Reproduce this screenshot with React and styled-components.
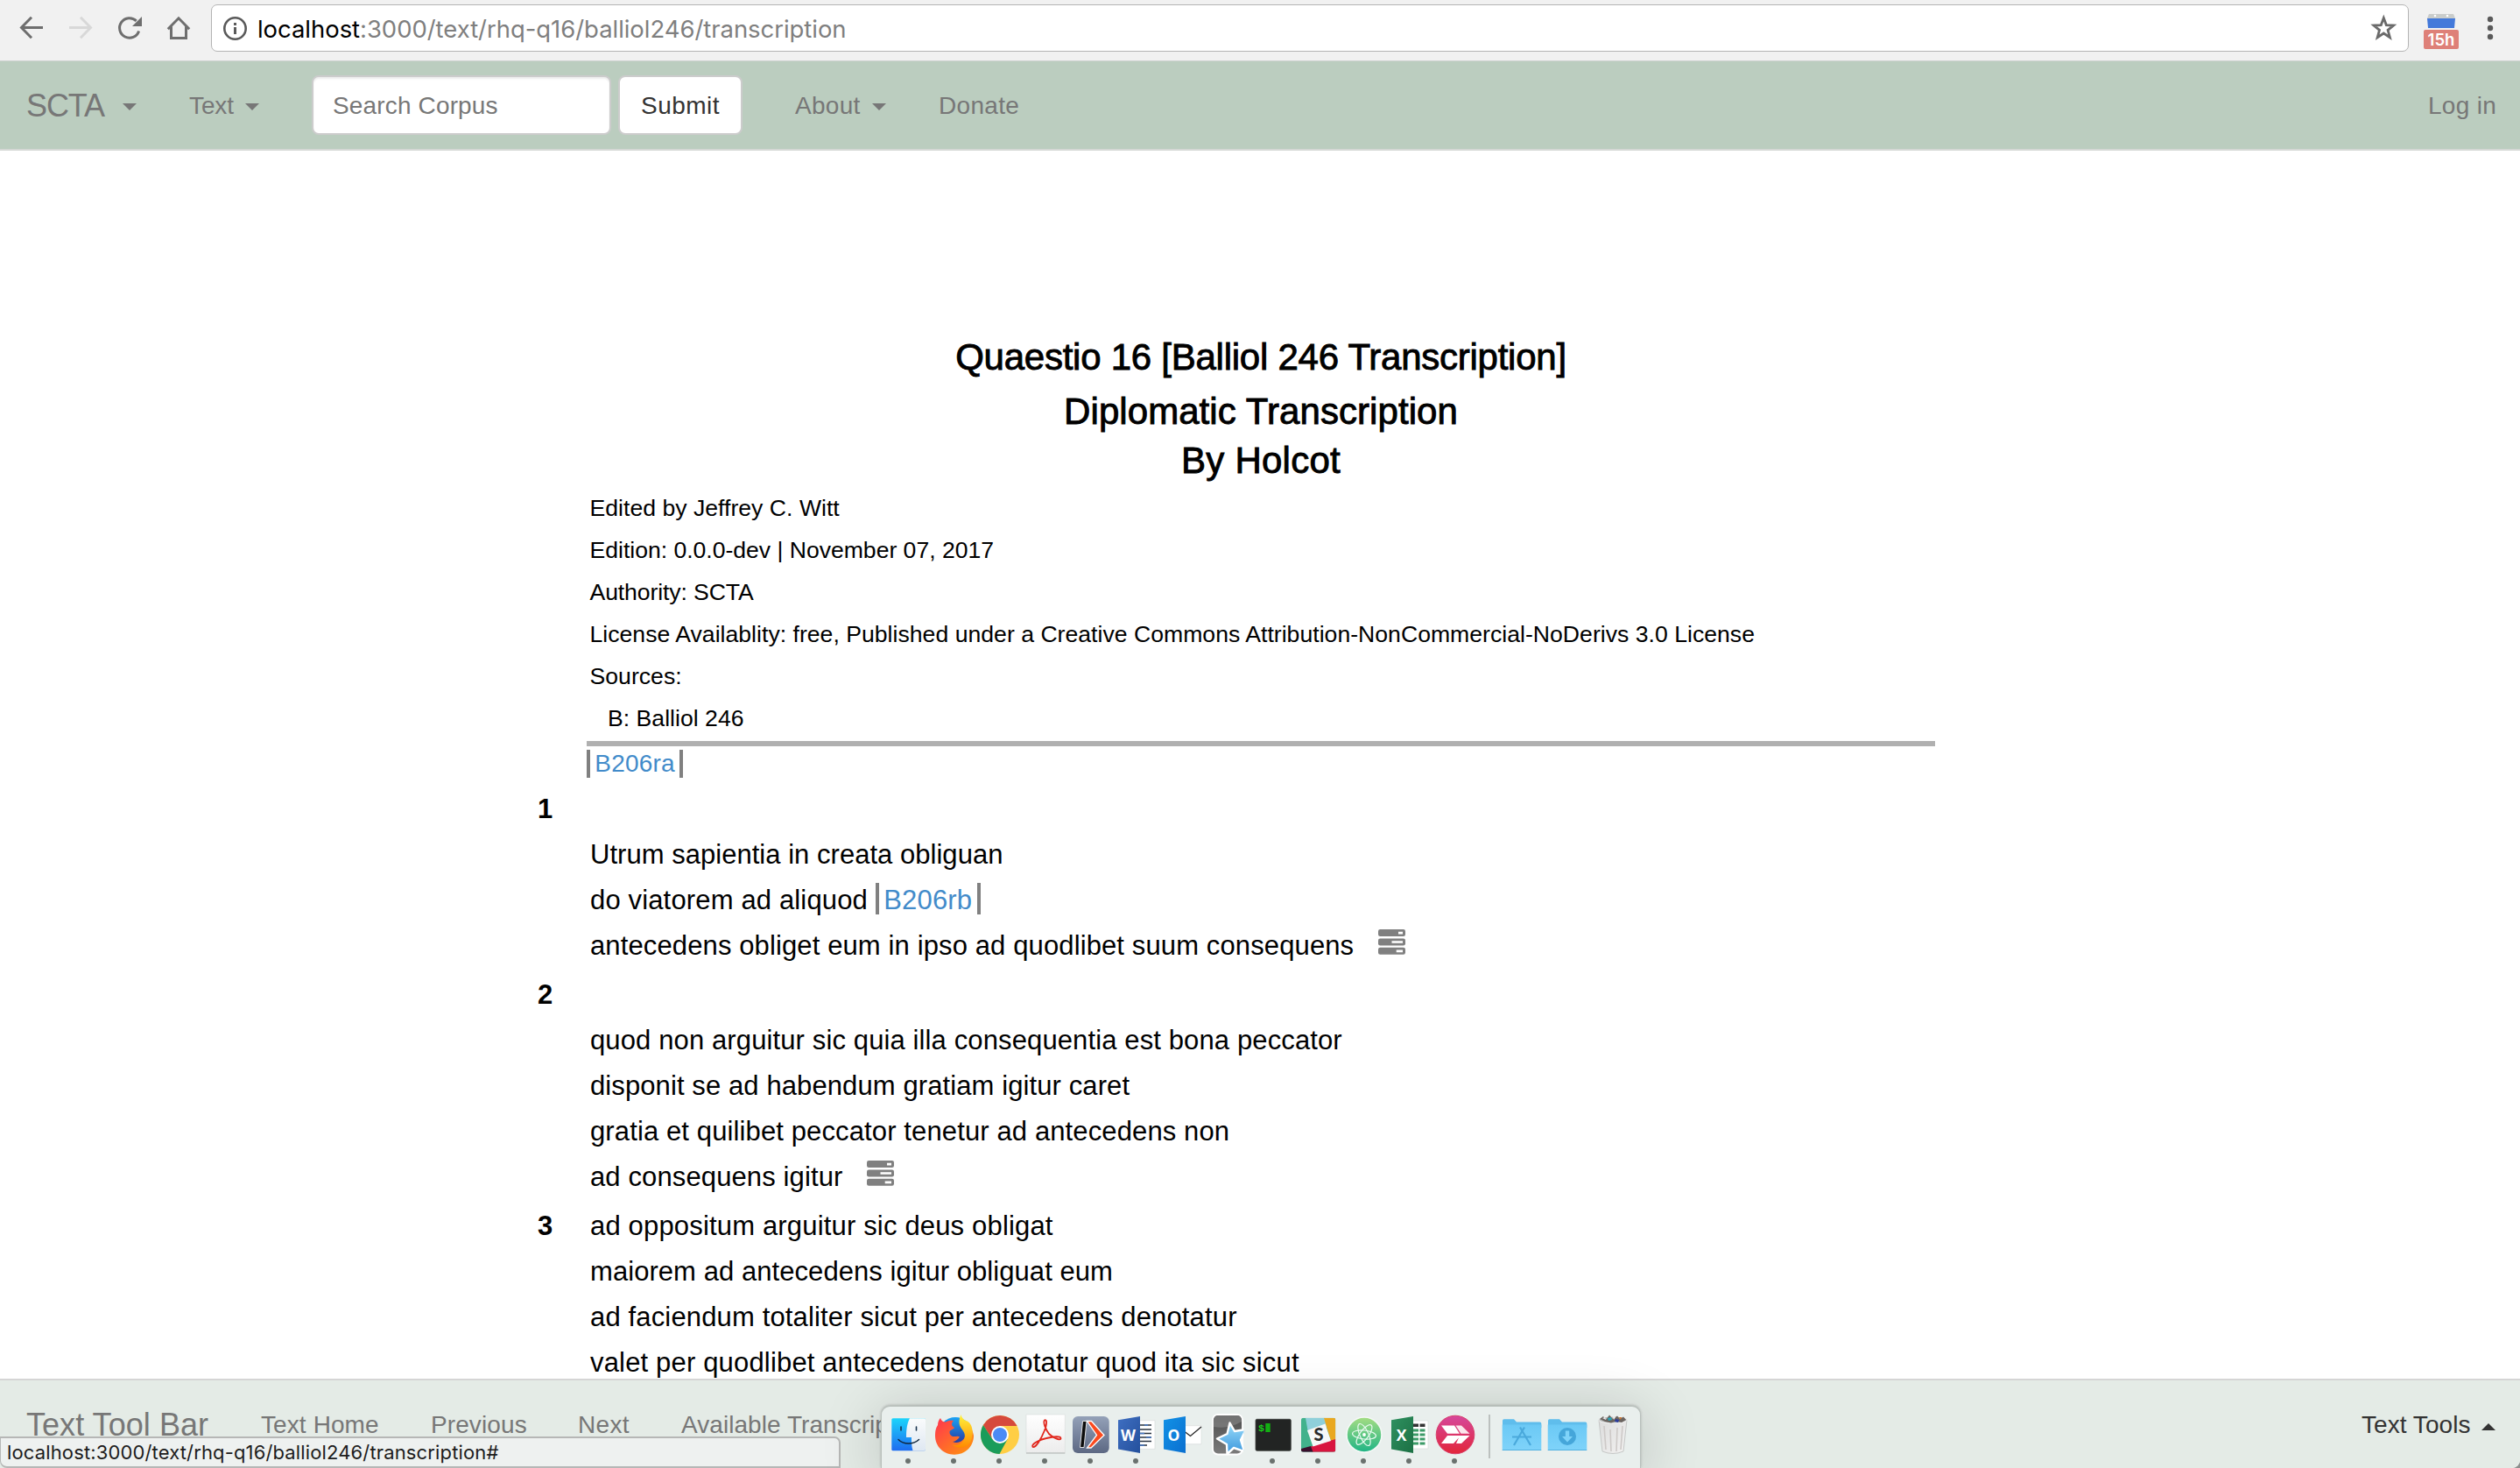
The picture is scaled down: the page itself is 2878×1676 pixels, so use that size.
import React from "react";
import styled, { createGlobalStyle } from "styled-components";

const GlobalStyle = createGlobalStyle`
  html, body { margin: 0; padding: 0; background: #8b8f8d; }
  * { box-sizing: border-box; }
`;

const sans = '"Liberation Sans", Arial, sans-serif';
const system = 'Inter, Roboto, sans-serif';

const Window = styled.div`
  position: relative;
  display: flex;
  flex-direction: column;
  width: 2878px;
  height: 1676px;
  overflow: hidden;
  background: #fff;
  border-bottom-right-radius: 9px;
  font-family: ${sans};
  color: #000;
`;

/* ---------- Browser toolbar ---------- */

const BrowserBar = styled.header`
  display: flex;
  align-items: flex-start;
  flex: none;
  height: 70px;
  padding: 5px 28px 0 22px;
  background: #f1f1f1;
  border-bottom: 1px solid #cfd3d0;
`;

const BrowserButtons = styled.div`
  display: flex;
  gap: 28px;
  padding-top: 13px;
  margin-right: 23px;
`;

const Icon = styled.svg`
  display: block;
  flex: none;
  overflow: visible;
`;

const AddressField = styled.div`
  display: flex;
  flex: 1;
  align-items: center;
  height: 54px;
  padding: 0 13px 0 12px;
  background: #fff;
  border: 1px solid #b4b4b4;
  border-radius: 7px;
`;

const Url = styled.span`
  flex: 1;
  margin-left: 10px;
  padding-top: 2px;
  font-family: ${system};
  font-size: 27.5px;
  line-height: 40px;
  letter-spacing: -0.05px;
  color: #7f7f7f;
`;

const UrlHost = styled.span`
  color: #000;
`;

const Extension = styled.div`
  display: flex;
  flex-direction: column;
  align-items: center;
  width: 40px;
  margin: 11px 30px 0 17px;
`;

const ExtensionBadge = styled.span`
  width: 40px;
  height: 22px;
  margin-top: 2px;
  border-radius: 2px;
  background: #de8078;
  color: #fff;
  font-family: ${system};
  font-size: 18.5px;
  font-weight: 600;
  line-height: 23px;
  text-align: center;
`;

/* ---------- Site navigation ---------- */

const Navbar = styled.nav`
  display: flex;
  align-items: center;
  flex: none;
  height: 102px;
  padding: 0 28px 0 30px;
  background: #bbcdbf;
  border-bottom: 2px solid #d5d8d5;
`;

const NavItem = styled.a`
  display: flex;
  align-items: center;
  justify-content: space-between;
  width: ${(p) => p.$width}px;
  margin-right: ${(p) => (p.$last ? 0 : 60)}px;
  padding-top: 2px;
  font-size: ${(p) => (p.$brand ? 36 : 28)}px;
  line-height: 40px;
  letter-spacing: ${(p) => p.$spacing ?? 0.3}px;
  white-space: nowrap;
  color: ${(p) => (p.$dark ? "#333" : "#777")};
`;

const Caret = styled.i`
  width: 0;
  height: 0;
  margin-top: ${(p) => (p.$up ? 3 : 2)}px;
  border: 8px solid transparent;
  border-top: ${(p) => (p.$up ? "0" : "8px solid #777")};
  border-bottom: ${(p) => (p.$up ? "8px solid #333" : "0")};
`;

const SearchForm = styled.form`
  display: flex;
  gap: 8px;
  margin: 0 60px 0 0;
`;

const SearchField = styled.div`
  width: 342px;
  height: 68px;
  padding: 1px 22px 0;
  border: 2px solid #ccc;
  border-radius: 8px;
  background: #fff;
  box-shadow: inset 0 2px 2px rgba(0, 0, 0, 0.075);
  color: #777;
  font-size: 28px;
  line-height: 64px;
  letter-spacing: 0.15px;
`;

const SubmitButton = styled.div`
  width: 142px;
  height: 68px;
  padding-top: 1px;
  border: 2px solid #ccc;
  border-radius: 8px;
  background: #fff;
  color: #333;
  font-size: 28px;
  line-height: 64px;
  letter-spacing: 0.45px;
  text-align: center;
`;

const Spacer = styled.div`
  flex: 1;
`;

/* ---------- Transcription ---------- */

const Main = styled.main`
  flex: 1;
  min-height: 0;
  width: 1596px;
  margin-left: 614px;
  padding-top: 214px;
  overflow: hidden;
`;

const DocumentHead = styled.section`
  margin-left: 56px;
  border-bottom: 6px solid #b0b0b0;
  padding-bottom: 2px;
`;

const Title = styled.h2`
  margin: 0 0 ${(p) => p.$gap}px;
  font-size: 42px;
  font-weight: 400;
  line-height: 44px;
  letter-spacing: ${(p) => p.$spacing}px;
  text-align: center;
  -webkit-text-stroke: 0.9px #000;
`;

const Meta = styled.div`
  padding-left: ${(p) => (p.$indent ? 24 : 3.5)}px;
  font-size: 26.6px;
  line-height: 48px;
  letter-spacing: ${(p) => p.$spacing ?? 0.02}px;
  white-space: nowrap;
`;

const PageBreak = styled.a`
  display: block;
  height: ${(p) => (p.$small ? 32 : 36)}px;
  width: ${(p) => (p.$small ? 110 : 120)}px;
  margin: ${(p) => (p.$small ? "4px 0 10px 56px" : "0 0 4px 0")};
  padding-top: ${(p) => (p.$small ? 0 : 2)}px;
  border: solid #808080;
  border-width: 0 4px;
  color: #428bca;
  font-size: ${(p) => (p.$small ? 28 : 31)}px;
  line-height: ${(p) => (p.$small ? 32 : 36)}px;
  letter-spacing: 0.2px;
  text-align: center;
`;

const Paragraph = styled.section`
  display: flex;
  margin-bottom: 4px;
`;

const Gutter = styled.b`
  flex: none;
  width: 60px;
  font-size: 31px;
  line-height: 52px;
`;

const Lines = styled.div`
  padding-top: ${(p) => (p.$dropped ? 52 : 0)}px;
`;

const Line = styled.div`
  display: flex;
  align-items: center;
  height: 52px;
  font-size: 31px;
  line-height: 52px;
  letter-spacing: ${(p) => p.$spacing ?? 0.12}px;
  white-space: pre;
`;

const ServerIcon = styled(Icon)`
  margin: 0 0 9px 28px;
`;

/* ---------- Bottom bar, status bubble and dock ---------- */

const ToolBar = styled(Navbar)`
  border-bottom: 0;
  border-top: 2px solid #d5d5d5;
  background: #e4ebe6;
`;

const StatusBubble = styled.div`
  position: absolute;
  left: 0;
  bottom: 0;
  width: 960px;
  height: 36px;
  padding-left: 7px;
  border: 2px solid #b6b7b6;
  border-left-width: 1px;
  border-radius: 0 7px 0 8px;
  background: #eef1f0;
  color: #1c1c1c;
  font-family: ${system};
  font-size: 22px;
  line-height: 32px;
  letter-spacing: 0.14px;
`;

const DockPanel = styled.div`
  position: absolute;
  left: 1006px;
  bottom: 0;
  display: flex;
  width: 868px;
  height: 71px;
  padding: 6px 5px 0 4px;
  border: 1px solid #b9c0bc;
  border-bottom: 0;
  border-radius: 10px 10px 0 0;
  background: #e9efed;
  box-shadow: 0 -1px 3px rgba(0, 0, 0, 0.2), 0 10px 70px rgba(0, 0, 0, 0.2);
`;

const DockItem = styled.div`
  display: flex;
  flex-direction: column;
  align-items: center;
  width: 52px;
`;

const RunningDot = styled.i`
  width: 6px;
  height: 6px;
  margin-top: 1px;
  border-radius: 50%;
  background: #6a716e;
`;

const DockDivider = styled.i`
  width: 2px;
  height: 50px;
  margin: 3px 10px 0 13px;
  background: #bcc1bf;
`;

/* ---------- Icons ---------- */

const BackIcon = ({ color, flip }) => (
  <Icon width="28" height="28" viewBox="0 0 28 28" fill="none" stroke={color} strokeWidth="3">
    <path transform={flip ? "translate(28 0) scale(-1 1)" : undefined} d="M27 13.5H3M14 1.8L2.5 13.5L14 25.2" />
  </Icon>
);

const ReloadIcon = () => (
  <Icon width="28" height="28" viewBox="0 0 28 28">
    <path d="M24.6 17.5A11.3 11.3 0 1 1 21.7 5.8" fill="none" stroke="#6e6e6e" strokeWidth="3" />
    <path d="M28 1v11H17z" fill="#6e6e6e" />
  </Icon>
);

const HomeIcon = () => (
  <Icon width="28" height="28" viewBox="0 0 28 28" fill="none" stroke="#6e6e6e" strokeWidth="3">
    <path d="M1.8 15.2L14 2.8L26.2 15.2M5.5 12.5V25.5H22.5V12.5" />
  </Icon>
);

const InfoIcon = () => (
  <Icon width="30" height="30" viewBox="0 0 30 30">
    <circle cx="14.5" cy="15.5" r="12.2" fill="none" stroke="#5a5a5a" strokeWidth="2.6" />
    <path d="M13 14h3v8h-3zM13 9h3v3h-3z" fill="#5a5a5a" />
  </Icon>
);

const StarIcon = () => (
  <Icon width="30" height="30" viewBox="0 0 30 30">
    <path
      d="M15.3 3.6L18.3 11.6L26.6 12L20.1 17.3L22.4 25.7L15.3 21L8.2 25.7L10.5 17.3L4 12L12.3 11.6Z"
      fill="none"
      stroke="#6a6a6a"
      strokeWidth="2.8"
    />
  </Icon>
);

const Servers = () => (
  <ServerIcon width="31" height="29" viewBox="0 0 31 29">
    <rect width="31" height="8" rx="2.2" fill="#808080" />
    <rect y="10.4" width="31" height="8" rx="2.2" fill="#808080" />
    <rect y="20.8" width="31" height="8" rx="2.2" fill="#808080" />
    <path d="M23 2.8h5v2.6h-5zM15.5 13.2H28v2.6H15.5zM20.7 23.6H28v2.6h-7.3z" fill="#fff" />
  </ServerIcon>
);

const Gradient = ({ id, from, to, diagonal }) => (
  <linearGradient id={id} x1="0" y1="0" x2={diagonal ? "1" : "0"} y2="1">
    <stop offset="0" stopColor={from} />
    <stop offset="1" stopColor={to} />
  </linearGradient>
);

const Finder = () => (
  <>
    <Gradient id="finder" from="#1cd4fb" to="#1e6cf0" />
    <Gradient id="finderFace" from="#fafbfc" to="#dfe8f2" />
    <rect x="7.3" y="7.3" width="38.7" height="37" rx="1.5" fill="url(#finder)" />
    <path d="M28 7.3H44.5a1.5 1.5 0 0 1 1.5 1.5V42.8a1.5 1.5 0 0 1-1.5 1.5H31.5C30 39 29.8 34 30 29H24C24 20 25 13 28 7.3Z" fill="url(#finderFace)" />
    <path d="M18 17v4M35.5 17v4" stroke="#17324d" strokeWidth="1.6" strokeLinecap="round" />
    <path d="M15 31.5C21 37.6 32 37.6 38.5 31.5" fill="none" stroke="#10263c" strokeWidth="1.5" strokeLinecap="round" />
  </>
);

const Firefox = () => (
  <>
    <Gradient id="fox" from="#ff3350" to="#ff9a0a" diagonal />
    <Gradient id="foxTail" from="#fff23c" to="#ff8a00" />
    <Gradient id="foxGlobe" from="#1aa3f5" to="#2b1d8c" />
    <circle cx="28" cy="25" r="19" fill="url(#foxGlobe)" />
    <path d="M11 7C12 10 14 11.5 17 11.5C20 9.5 23 9.5 26 10C24 12 23.5 13.5 24.5 16L27 18C26 20 22 20.5 21.5 22.5C21.5 25 22 26 24 27.5C27 29 31 26.5 33 28.5C31.5 30.5 29 33.5 25 34C31 37 39 33 40 25C41 19 38 14 36 11C44 14 48 20 49 27C49 40 39 48.7 27 48.7C14 48.7 5 39 5 27C5 21 6 18 8 15C8 12 9 9 11 7Z" fill="url(#fox)" />
    <path d="M34.5 3C32 9 31.5 14 35 19C38 23 41 27 37 33C34 38 28 39 24 37C32 44 43 41 46 33C50 24 47 11 40 10C37 8.5 35 6 34.5 3Z" fill="url(#foxTail)" />
  </>
);

const Chrome = () => (
  <>
    <circle cx="27" cy="26" r="22" fill="#ffce44" />
    <path d="M27 16H46.6A22 22 0 0 0 7.9 15L18.3 31Z" fill="#d6493c" />
    <path d="M7.9 15A22 22 0 0 0 26.5 48L35.7 31L27 34L18.3 31Z" fill="#1a9c5a" />
    <circle cx="27" cy="26" r="10" fill="#fff" />
    <circle cx="27" cy="26" r="8" fill="#4c8bf5" />
  </>
);

const Acrobat = () => (
  <>
    <Gradient id="pdf" from="#ffffff" to="#ececec" />
    <path d="M5 3h44.3v43.7H5z" fill="url(#pdf)" stroke="#d9dcdb" strokeWidth="0.6" />
    <path d="M5 47h44.3" stroke="#aeb2b0" />
    <path d="M26 9.5C29.5 7.5 28 17 26 21C22 31 16 41 12.5 40C10 37 20 31.5 28 30C36 28.2 45 27 44.5 30.5C43 33 35 29 31 25C27 20 24 11.5 26 9.5Z" fill="none" stroke="#e1271d" strokeWidth="1.8" />
  </>
);

const RemoteApp = () => (
  <>
    <Gradient id="remote" from="#94a1b8" to="#5c6883" />
    <rect x="6" y="5" width="41.7" height="42" rx="6" fill="url(#remote)" />
    <path d="M17.5 10.5h4.5L19 40.5h-4.5z" fill="#0c0c0c" stroke="#f3f3f3" strokeWidth="0.9" />
    <path d="M22.5 10.5H27.5L42 26.5L27 41H22.500L33.500 26.500Z" fill="#fb4a1e" stroke="#fff" strokeWidth="1.3" />
  </>
);

const OfficeCover = ({ id, from, to, letter }) => (
  <>
    <Gradient id={id} from={from} to={to} diagonal />
    <path d="M6 9.3L31 5V47L6 42.5Z" fill={`url(#${id})`} />
    <text x="17.5" y="32.5" textAnchor="middle" fontFamily="Open Sans, sans-serif" fontWeight="700" fontSize="17.5" fill="#fff">
      {letter}
    </text>
  </>
);

const Word = () => (
  <>
    <path d="M29 9.7h19v32.6H29z" fill="#fff" stroke="#d5d9d8" strokeWidth="0.6" />
    <path d="M31 15h13M31 20h13M31 24.5h13M31 29h13M31 33.5h13M31 38h8" stroke="#2a3442" strokeWidth="1.5" />
    <path d="M36 15h4M31 24.5h5M38 29h6M31 38h5" stroke="#4a79c4" strokeWidth="1.5" />
    <OfficeCover id="word" from="#3f6fc2" to="#24509c" letter="W" />
  </>
);

const Outlook = () => (
  <>
    <path d="M30 15.7h19v21H30z" fill="#fff" stroke="#d5d9d8" strokeWidth="0.6" />
    <path d="M30 22.5L36.5 27.5L49 17" fill="none" stroke="#262626" strokeWidth="1.3" />
    <OfficeCover id="outlook" from="#1292e6" to="#0a6fd0" letter="O" />
  </>
);

const Excel = () => (
  <>
    <path d="M30 10h18v32H30z" fill="#fff" stroke="#d5d9d8" strokeWidth="0.6" />
    <path d="M31 13.5h6v3.5h-6zM38.5 13.5h6v3.5h-6z" fill="#333" />
    <path d="M31 21h6M38.5 21h6M31 26h6M38.5 26h6M31 31h6M38.5 31h6M31 36h6M38.5 36h6" stroke="#3c9b68" strokeWidth="3.2" />
    <OfficeCover id="excel" from="#2f9160" to="#1c7044" letter="X" />
  </>
);

const StarCard = () => (
  <>
    <Gradient id="card" from="#4c4c4c" to="#7c7c7c" />
    <Gradient id="cardStar" from="#9adcfa" to="#3a96dc" />
    <clipPath id="cardClip"><rect x="9" y="2" width="36.5" height="47.5" rx="7" /></clipPath>
    <rect x="10" y="3" width="34" height="45.5" rx="6" fill="url(#card)" stroke="#fff" strokeWidth="1.8" />
    <path d="M11 17Q28 20 43 11V9a5 5 0 0 0-5-5H16a5 5 0 0 0-5 5Z" fill="#8a8a8a" opacity="0.6" />
    <g clipPath="url(#cardClip)">
      <path d="M29.5 12.5L35 22L48 20L42 32L46 45L34 41L26.5 48L26 37L15 30.500L26.500 25Z" fill="url(#cardStar)" stroke="#fff" strokeWidth="2.4" strokeLinejoin="round" />
    </g>
  </>
);

const Terminal = () => (
  <>
    <rect x="7" y="8.3" width="40.3" height="36" rx="1.5" fill="#222423" stroke="#3d403e" strokeWidth="0.8" />
    <text x="10" y="22" fontFamily="Liberation Mono, monospace" fontWeight="700" fontSize="11.5" fill="#19d219">$</text>
    <path d="M18.3 13h5.4v10h-5.4z" fill="#12b012" />
  </>
);

const Slack = () => (
  <>
    <clipPath id="slackClip"><rect x="7" y="6.7" width="39.3" height="39" rx="2.5" /></clipPath>
    <g clipPath="url(#slackClip)">
      <path d="M7 6.7h39.3v39H7z" fill="#42b28c" />
      <path d="M12 6.7H34L37 17L15 24Z" fill="#8fd0da" />
      <path d="M33 6.7H46.3V32L41 33L36 17Z" fill="#e9a820" />
      <path d="M46.3 31V45.7H20L18 39.5Z" fill="#d8153f" />
      <path d="M7 42L18 39L20.5 45.7H7Z" fill="#3a0f2c" />
      <path d="M14 21L34.5 13.5L41 33L20.5 39.5Z" fill="#f6f8f8" />
    </g>
    <text x="27" y="33" textAnchor="middle" fontFamily="Lato, sans-serif" fontWeight="900" fontSize="20" fill="#2b2b2b">S</text>
  </>
);

const Atom = () => (
  <>
    <Gradient id="atom" from="#a5dd83" to="#1fb485" />
    <circle cx="27" cy="26" r="20" fill="url(#atom)" stroke="#f4f8f6" strokeWidth="1.6" />
    <g fill="none" stroke="#eafaf1" strokeWidth="1.2">
      <ellipse cx="27" cy="26" rx="13.5" ry="5" transform="rotate(6 27 26)" />
      <ellipse cx="27" cy="26" rx="13.5" ry="5" transform="rotate(66 27 26)" />
      <ellipse cx="27" cy="26" rx="13.5" ry="5" transform="rotate(126 27 26)" />
    </g>
    <circle cx="27" cy="26" r="1.9" fill="#fff" />
  </>
);

const Skitch = () => (
  <>
    <Gradient id="skitch" from="#d6479c" to="#e2263a" />
    <circle cx="27" cy="26" r="21.8" fill="url(#skitch)" stroke="#d8406c" />
    <path d="M11 15.5H26L32 24.8H18Z" fill="#fff" />
    <path d="M27.5 15.5H34L43.5 24.8H33.500Z" fill="#fbe6ec" />
    <path d="M18 27H43.5L34 36H28L31 29.5L25 36H11Z" fill="#fff" />
  </>
);

const FolderShape = ({ children, id }) => (
  <>
    <Gradient id={id} from="#6bc9f5" to="#7fd3fa" />
    <path d="M4 10a1.7 1.7 0 0 1 1.7-1.7H17L20 11.5H46.5A1.7 1.7 0 0 1 48.3 13V18H4Z" fill="#5fbdec" />
    <path d="M3.7 14.5H48.3V42.5a1.5 1.5 0 0 1-1.5 1.5H5.2a1.5 1.5 0 0 1-1.5-1.5Z" fill={`url(#${id})`} />
    <path d="M3.7 43.5H48.3" stroke="#52b0e0" />
    {children}
  </>
);

const Applications = () => (
  <FolderShape id="apps">
    <path d="M24 17.5L36 38M29 17.5L17 38M15 28.5H37" fill="none" stroke="#4aa9dc" strokeWidth="2.2" />
  </FolderShape>
);

const Downloads = () => (
  <FolderShape id="downloads">
    <circle cx="26" cy="28" r="10" fill="#45a6da" />
    <path d="M23.8 21.5h4.4V28H32L26 34.5L20 28h3.8z" fill="#7fd3fa" />
  </FolderShape>
);

const Trash = () => (
  <>
    <Gradient id="trash" from="#dcdcdc" to="#f3f2f1" diagonal />
    <path d="M10 9L14 45Q26 50 38 45L42 9Z" fill="url(#trash)" stroke="#c6c8c7" />
    <path d="M16 16L18 43M23 20L24 45M31 18L30 45M37 16L35 43" stroke="#cdc9c7" strokeWidth="1.6" />
    <ellipse cx="26" cy="9" rx="16.3" ry="4" fill="#b9bcbb" stroke="#f4f4f4" />
    <path d="M11 8L15 5L18 9L22 3.5L26 8L31 4.5L34 8L38 5.5L41 9L36 12L30 10.5L24 12.5L17 11Z" fill="#6b6460" />
    <path d="M20 7l4-1 1 3-4 1z" fill="#2aa5b8" />
    <path d="M29 8l4 1-1 3-4-1z" fill="#2c3c9c" />
    <path d="M33 6l3 0-1 3z" fill="#d0762c" />
    <path d="M14 7l3-1 1 3zM26 5l3 1-2 3z" fill="#f1f1f1" />
  </>
);

const dockApps = [
  { Art: Finder, running: true },
  { Art: Firefox, running: true },
  { Art: Chrome, running: true },
  { Art: Acrobat, running: true },
  { Art: RemoteApp, running: true },
  { Art: Word, running: true },
  { Art: Outlook },
  { Art: StarCard },
  { Art: Terminal, running: true },
  { Art: Slack, running: true },
  { Art: Atom, running: true },
  { Art: Excel, running: true },
  { Art: Skitch, running: true },
];

const DockEntry = ({ Art, running }) => (
  <DockItem>
    <Icon width="52" height="52" viewBox="0 0 52 52">
      <Art />
    </Icon>
    {running && <RunningDot />}
  </DockItem>
);

const Dock = () => (
  <DockPanel>
    {dockApps.map((app, i) => (
      <DockEntry key={i} {...app} />
    ))}
    <DockDivider />
    <DockEntry Art={Applications} />
    <DockEntry Art={Downloads} />
    <DockEntry Art={Trash} />
  </DockPanel>
);

const paragraphs = [
  {
    n: 1,
    dropped: true,
    lines: [
      { text: "Utrum sapientia in creata obliguan", spacing: 0.03 },
      { text: "do viatorem ad aliquod ", pageBreak: "B206rb", spacing: 0.15 },
      { text: "antecedens obliget eum in ipso ad quodlibet suum consequens", icon: true },
    ],
  },
  {
    n: 2,
    dropped: true,
    lines: [
      { text: "quod non arguitur sic quia illa consequentia est bona peccator" },
      { text: "disponit se ad habendum gratiam igitur caret", spacing: 0.1 },
      { text: "gratia et quilibet peccator tenetur ad antecedens non" },
      { text: "ad consequens igitur", icon: true },
    ],
  },
  {
    n: 3,
    lines: [
      { text: "ad oppositum arguitur sic deus obligat", spacing: 0.17 },
      { text: "maiorem ad antecedens igitur obliguat eum", spacing: 0.06 },
      { text: "ad faciendum totaliter sicut per antecedens denotatur", spacing: 0.15 },
      { text: "valet per quodlibet antecedens denotatur quod ita sic sicut", spacing: 0.17 },
    ],
  },
];

export default function App() {
  return (
    <Window>
      <GlobalStyle />
      <BrowserBar>
        <BrowserButtons>
          <BackIcon color="#6e6e6e" />
          <BackIcon color="#d8d8d8" flip />
          <ReloadIcon />
          <HomeIcon />
        </BrowserButtons>
        <AddressField>
          <InfoIcon />
          <Url>
            <UrlHost>localhost</UrlHost>:3000/text/rhq-q16/balliol246/transcription
          </Url>
          <StarIcon />
        </AddressField>
        <Extension>
          <Icon width="32" height="16" viewBox="0 0 32 16">
            <path d="M2 0h28l2 5H0z" fill="#c9cccb" />
            <circle cx="9" cy="2" r="1.3" fill="#fff" />
            <circle cx="23" cy="2" r="1.3" fill="#fff" />
            <path d="M0 5h32l-1 11H1z" fill="#4479da" />
          </Icon>
          <ExtensionBadge>15h</ExtensionBadge>
        </Extension>
        <Icon width="12" height="54" viewBox="0 0 12 54" fill="#5a5a5a">
          <circle cx="6" cy="17" r="3.2" />
          <circle cx="6" cy="27" r="3.2" />
          <circle cx="6" cy="37" r="3.2" />
        </Icon>
      </BrowserBar>

      <Navbar>
        <NavItem $brand $width={126} $spacing={-1.1}>SCTA <Caret /></NavItem>
        <NavItem $width={80} $spacing={-0.1}>Text <Caret /></NavItem>
        <SearchForm>
          <SearchField>Search Corpus</SearchField>
          <SubmitButton>Submit</SubmitButton>
        </SearchForm>
        <NavItem $width={104}>About <Caret /></NavItem>
        <NavItem $width={91}>Donate</NavItem>
        <Spacer />
        <NavItem $last $width={77}>Log in</NavItem>
      </Navbar>

      <Main>
        <DocumentHead>
          <Title $gap={18} $spacing={-0.25}>Quaestio 16 [Balliol 246 Transcription]</Title>
          <Title $gap={12} $spacing={0.07}>Diplomatic Transcription</Title>
          <Title $gap={8} $spacing={0.25}>By Holcot</Title>
          <Meta>Edited by Jeffrey C. Witt</Meta>
          <Meta $spacing={-0.02}>Edition: 0.0.0-dev | November 07, 2017</Meta>
          <Meta $spacing={-0.1}>Authority: SCTA</Meta>
          <Meta>
            License Availablity: free, Published under a Creative Commons Attribution-NonCommercial-NoDerivs 3.0 License
          </Meta>
          <Meta>Sources:</Meta>
          <Meta $indent>B: Balliol 246</Meta>
        </DocumentHead>
        <PageBreak $small>B206ra</PageBreak>
        {paragraphs.map((p) => (
          <Paragraph key={p.n}>
            <Gutter>{p.n}</Gutter>
            <Lines $dropped={p.dropped}>
              {p.lines.map((line) => (
                <Line key={line.text} $spacing={line.spacing}>
                  <span>{line.text}</span>
                  {line.pageBreak && <PageBreak>{line.pageBreak}</PageBreak>}
                  {line.icon && <Servers />}
                </Line>
              ))}
            </Lines>
          </Paragraph>
        ))}
      </Main>

      <ToolBar>
        <NavItem $brand $width={208} $spacing={0.05}>Text Tool Bar</NavItem>
        <NavItem $width={134} $spacing={0.1}>Text Home</NavItem>
        <NavItem $width={108} $spacing={0.1}>Previous</NavItem>
        <NavItem $width={58}>Next</NavItem>
        <NavItem $width={320} $spacing={0.05}>Available Transcriptions</NavItem>
        <Spacer />
        <NavItem $last $dark $width={153} $spacing={0.05}>Text Tools <Caret $up /></NavItem>
      </ToolBar>
      <StatusBubble>localhost:3000/text/rhq-q16/balliol246/transcription#</StatusBubble>
      <Dock />
    </Window>
  );
}
